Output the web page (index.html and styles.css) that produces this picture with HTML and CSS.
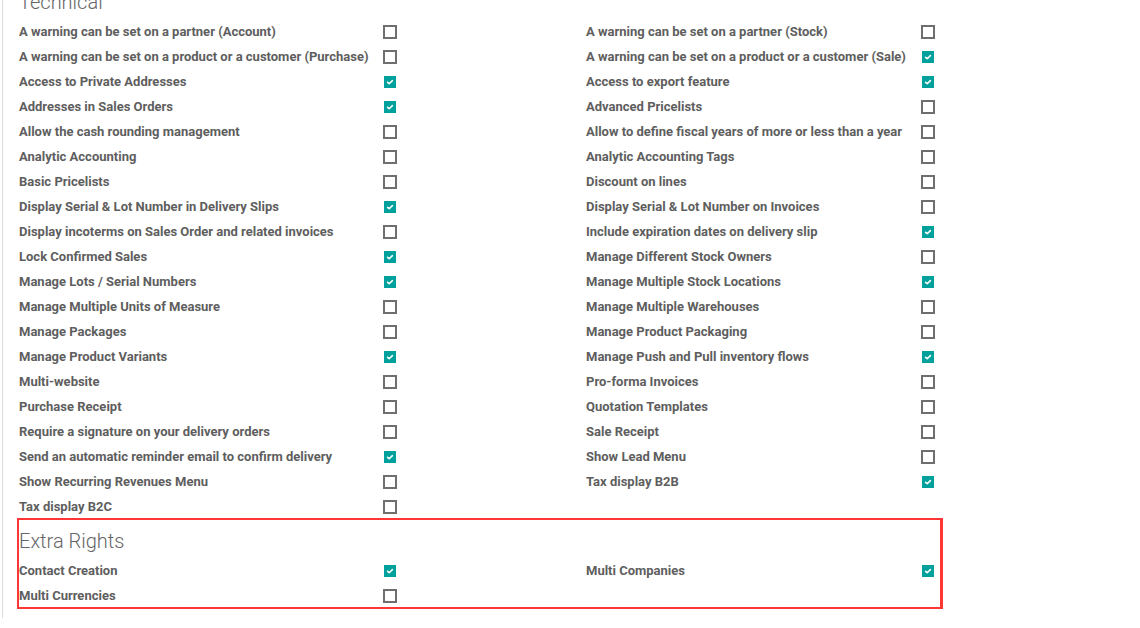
FILE: index.html
```html
<!DOCTYPE html>
<html>
<head>
<meta charset="utf-8">
<link rel="stylesheet" href="styles.css">
</head>
<body>
<div class="page">
  <h2 class="group-title first">Technical</h2>
  <div class="fields">
    <div class="field"><span class="label">A warning can be set on a partner (Account)</span><span class="box"></span></div>
    <div class="field"><span class="label">A warning can be set on a partner (Stock)</span><span class="box"></span></div>
    <div class="field"><span class="label">A warning can be set on a product or a customer (Purchase)</span><span class="box"></span></div>
    <div class="field"><span class="label">A warning can be set on a product or a customer (Sale)</span><span class="box on"><svg viewBox="0 0 12 12"><path d="M3.6 6.3 L5.2 7.7 L8.4 4.6"/></svg></span></div>
    <div class="field"><span class="label">Access to Private Addresses</span><span class="box on"><svg viewBox="0 0 12 12"><path d="M3.6 6.3 L5.2 7.7 L8.4 4.6"/></svg></span></div>
    <div class="field"><span class="label">Access to export feature</span><span class="box on"><svg viewBox="0 0 12 12"><path d="M3.6 6.3 L5.2 7.7 L8.4 4.6"/></svg></span></div>
    <div class="field"><span class="label">Addresses in Sales Orders</span><span class="box on"><svg viewBox="0 0 12 12"><path d="M3.6 6.3 L5.2 7.7 L8.4 4.6"/></svg></span></div>
    <div class="field"><span class="label">Advanced Pricelists</span><span class="box"></span></div>
    <div class="field"><span class="label">Allow the cash rounding management</span><span class="box"></span></div>
    <div class="field"><span class="label">Allow to define fiscal years of more or less than a year</span><span class="box"></span></div>
    <div class="field"><span class="label">Analytic Accounting</span><span class="box"></span></div>
    <div class="field"><span class="label">Analytic Accounting Tags</span><span class="box"></span></div>
    <div class="field"><span class="label">Basic Pricelists</span><span class="box"></span></div>
    <div class="field"><span class="label">Discount on lines</span><span class="box"></span></div>
    <div class="field"><span class="label">Display Serial &amp; Lot Number in Delivery Slips</span><span class="box on"><svg viewBox="0 0 12 12"><path d="M3.6 6.3 L5.2 7.7 L8.4 4.6"/></svg></span></div>
    <div class="field"><span class="label">Display Serial &amp; Lot Number on Invoices</span><span class="box"></span></div>
    <div class="field"><span class="label">Display incoterms on Sales Order and related invoices</span><span class="box"></span></div>
    <div class="field"><span class="label">Include expiration dates on delivery slip</span><span class="box on"><svg viewBox="0 0 12 12"><path d="M3.6 6.3 L5.2 7.7 L8.4 4.6"/></svg></span></div>
    <div class="field"><span class="label">Lock Confirmed Sales</span><span class="box on"><svg viewBox="0 0 12 12"><path d="M3.6 6.3 L5.2 7.7 L8.4 4.6"/></svg></span></div>
    <div class="field"><span class="label">Manage Different Stock Owners</span><span class="box"></span></div>
    <div class="field"><span class="label">Manage Lots / Serial Numbers</span><span class="box on"><svg viewBox="0 0 12 12"><path d="M3.6 6.3 L5.2 7.7 L8.4 4.6"/></svg></span></div>
    <div class="field"><span class="label">Manage Multiple Stock Locations</span><span class="box on"><svg viewBox="0 0 12 12"><path d="M3.6 6.3 L5.2 7.7 L8.4 4.6"/></svg></span></div>
    <div class="field"><span class="label">Manage Multiple Units of Measure</span><span class="box"></span></div>
    <div class="field"><span class="label">Manage Multiple Warehouses</span><span class="box"></span></div>
    <div class="field"><span class="label">Manage Packages</span><span class="box"></span></div>
    <div class="field"><span class="label">Manage Product Packaging</span><span class="box"></span></div>
    <div class="field"><span class="label">Manage Product Variants</span><span class="box on"><svg viewBox="0 0 12 12"><path d="M3.6 6.3 L5.2 7.7 L8.4 4.6"/></svg></span></div>
    <div class="field"><span class="label">Manage Push and Pull inventory flows</span><span class="box on"><svg viewBox="0 0 12 12"><path d="M3.6 6.3 L5.2 7.7 L8.4 4.6"/></svg></span></div>
    <div class="field"><span class="label">Multi-website</span><span class="box"></span></div>
    <div class="field"><span class="label">Pro-forma Invoices</span><span class="box"></span></div>
    <div class="field"><span class="label">Purchase Receipt</span><span class="box"></span></div>
    <div class="field"><span class="label">Quotation Templates</span><span class="box"></span></div>
    <div class="field"><span class="label">Require a signature on your delivery orders</span><span class="box"></span></div>
    <div class="field"><span class="label">Sale Receipt</span><span class="box"></span></div>
    <div class="field"><span class="label">Send an automatic reminder email to confirm delivery</span><span class="box on"><svg viewBox="0 0 12 12"><path d="M3.6 6.3 L5.2 7.7 L8.4 4.6"/></svg></span></div>
    <div class="field"><span class="label">Show Lead Menu</span><span class="box"></span></div>
    <div class="field"><span class="label">Show Recurring Revenues Menu</span><span class="box"></span></div>
    <div class="field"><span class="label">Tax display B2B</span><span class="box on"><svg viewBox="0 0 12 12"><path d="M3.6 6.3 L5.2 7.7 L8.4 4.6"/></svg></span></div>
    <div class="field"><span class="label">Tax display B2C</span><span class="box"></span></div>
  </div>

  <div class="extra">
    <h2 class="group-title">Extra Rights</h2>
    <div class="fields">
      <div class="field"><span class="label">Contact Creation</span><span class="box on"><svg viewBox="0 0 12 12"><path d="M3.6 6.3 L5.2 7.7 L8.4 4.6"/></svg></span></div>
      <div class="field"><span class="label">Multi Companies</span><span class="box on"><svg viewBox="0 0 12 12"><path d="M3.6 6.3 L5.2 7.7 L8.4 4.6"/></svg></span></div>
      <div class="field"><span class="label">Multi Currencies</span><span class="box"></span></div>
    </div>
    <div class="highlight"></div>
  </div>
</div>
</body>
</html>
```

FILE: styles.css
```css
html, body {
  margin: 0;
  padding: 0;
  background: #ffffff;
}

body {
  font-family: Roboto, "Liberation Sans", sans-serif;
  color: #666666;
  height: 628px;
  overflow: hidden;
}

.page {
  margin-left: 2px;
  border-left: 1px solid #dcdcdc;
  padding-left: 16px;
  min-height: 628px;
  box-sizing: border-box;
}

.group-title {
  font-size: 20px;
  font-weight: 300;
  line-height: 24px;
  height: 24px;
  margin: 0 0 5px 0;
  color: #666666;
}

.group-title.first {
  margin-top: -10px;
}

.fields {
  display: grid;
  grid-template-columns: 567px 1fr;
  grid-auto-rows: 25px;
}

.field {
  display: flex;
  align-items: center;
}

.label {
  width: 364px;
  font-size: 13px;
  font-weight: 700;
  color: #5e5e5e;
  white-space: nowrap;
}

.field:nth-child(even) .label {
  width: 335px;
}

.box {
  box-sizing: border-box;
  width: 14px;
  height: 14px;
  border: 2px solid #6f6f6f;
  background: #fff;
  display: flex;
  align-items: center;
  justify-content: center;
}

.box.on {
  width: 12px;
  height: 12px;
  margin-left: 1px;
  border: none;
  background: #00a09d;
}

.box svg {
  width: 12px;
  height: 12px;
  fill: none;
  stroke: #ffffff;
  stroke-width: 1.6;
  stroke-linecap: round;
  stroke-linejoin: round;
}

.extra {
  position: relative;
  padding-top: 10px;
}

.highlight {
  position: absolute;
  left: -2px;
  top: -1px;
  width: 926px;
  height: 91px;
  box-sizing: border-box;
  border: 2px solid #ff3636;
  border-right-width: 3px;
  pointer-events: none;
}
```
